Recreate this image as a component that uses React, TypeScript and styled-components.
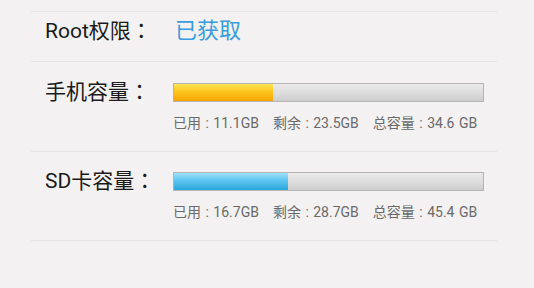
import React from "react";
import styled, { createGlobalStyle } from "styled-components";

const Global = createGlobalStyle`
  html, body { margin: 0; padding: 0; background: #f3f1f2; }
  body { font-family: Roboto, "Noto Sans CJK SC", sans-serif; }
`;

const Page = styled.div`
  width: 534px;
  height: 288px;
  background: #f3f1f2;
  padding: 11px 37px 0 31px;
  box-sizing: border-box;
`;

const List = styled.div`
  display: flex;
  flex-direction: column;
  border-top: 1px solid #e5e3e4;
`;

const Row = styled.div<{ $pt: number; $pb: number }>`
  display: grid;
  grid-template-columns: 128px 311px;
  align-items: center;
  row-gap: 13px;
  padding: ${(p) => p.$pt}px 0 ${(p) => p.$pb}px 14px;
  border-bottom: 1px solid #e5e3e4;
`;

const Label = styled.div<{ $lh?: number }>`
  font-family: Roboto, "Noto Sans CJK TC", sans-serif;
  font-size: 21px;
  line-height: ${(p) => p.$lh ?? 20}px;
  color: #1b1b1b;
  white-space: nowrap;
`;

const Value = styled.div`
  font-family: Roboto, "Noto Sans CJK SC", sans-serif;
  font-size: 22px;
  line-height: 26px;
  color: #3a9ddf;
  padding-left: 2px;
`;

const Track = styled.div`
  height: 19px;
  box-sizing: border-box;
  border: 1px solid #b4b4b4;
  background: linear-gradient(to bottom, #ebebeb 0%, #dcdcdc 55%, #cdcdcd 100%);
  display: flex;
`;

const Fill = styled.div<{ $kind: "orange" | "blue" }>`
  height: 100%;
  background: ${(p) =>
    p.$kind === "orange"
      ? "linear-gradient(to bottom, #fde45a 0%, #fcc51c 45%, #f9a306 100%)"
      : "linear-gradient(to bottom, #9fe0f9 0%, #5cc3ef 45%, #2aa6dc 100%)"};
`;

const Stats = styled.div`
  grid-column: 2;
  display: flex;
  gap: 14px;
  font-family: Roboto, "Noto Sans CJK SC", sans-serif;
  font-size: 14px;
  line-height: 16px;
  word-spacing: 1px;
  color: #6a6a6a;
  white-space: nowrap;
`;

const Stat = styled.span``;

type Storage = {
  label: string;
  used: number;
  free: number;
  total: number;
  kind: "orange" | "blue";
  pt: number;
  pb: number;
};

const storages: Storage[] = [
  { label: "手机容量：", used: 11.1, free: 23.5, total: 34.6, kind: "orange", pt: 20, pb: 20 },
  { label: "SD卡容量：", used: 16.7, free: 28.7, total: 45.4, kind: "blue", pt: 19, pb: 20 },
];

export default function App() {
  return (
    <>
      <Global />
      <Page>
        <List>
          <Row $pt={6} $pb={17}>
            <Label $lh={26}>Root权限：</Label>
            <Value>已获取</Value>
          </Row>
          {storages.map((s) => (
            <Row key={s.label} $pt={s.pt} $pb={s.pb}>
              <Label>{s.label}</Label>
              <Track>
                <Fill $kind={s.kind} style={{ width: `${(s.used / s.total) * 100}%` }} />
              </Track>
              <Stats>
                <Stat>已用 : {s.used.toFixed(1)}GB</Stat>
                <Stat>剩余 : {s.free.toFixed(1)}GB</Stat>
                <Stat>总容量 : {s.total.toFixed(1)} GB</Stat>
              </Stats>
            </Row>
          ))}
        </List>
      </Page>
    </>
  );
}
